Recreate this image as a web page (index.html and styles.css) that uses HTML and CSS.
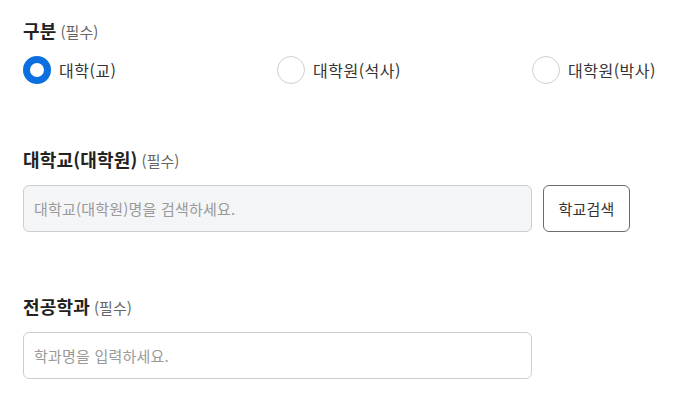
FILE: index.html
```html
<!DOCTYPE html>
<html lang="ko">
<head>
<meta charset="utf-8">
<title>학력 정보</title>
<link rel="stylesheet" href="styles.css">
</head>
<body>
<form class="form">
  <div class="field">
    <div class="label"><span class="label-text">구분</span><span class="req">(필수)</span></div>
    <div class="radios">
      <label class="radio"><span class="dot checked"></span><span class="radio-text">대학(교)</span></label>
      <label class="radio"><span class="dot"></span><span class="radio-text">대학원(석사)</span></label>
      <label class="radio"><span class="dot"></span><span class="radio-text">대학원(박사)</span></label>
    </div>
  </div>
  <div class="field field-school">
    <div class="label"><span class="label-text">대학교(대학원)</span><span class="req">(필수)</span></div>
    <div class="row">
      <div class="input readonly"><span class="ph">대학교(대학원)명을 검색하세요.</span></div>
      <button type="button" class="btn">학교검색</button>
    </div>
  </div>
  <div class="field">
    <div class="label"><span class="label-text">전공학과</span><span class="req">(필수)</span></div>
    <div class="row">
      <div class="input"><span class="ph">학과명을 입력하세요.</span></div>
    </div>
  </div>
</form>
</body>
</html>
```
FILE: styles.css
```css
* { box-sizing: border-box; }
html, body { margin: 0; padding: 0; background: #fff; }
body {
  font-family: "Noto Sans CJK KR", "Noto Sans", sans-serif;
  color: #333;
}
.form { padding: 18px 23px 0; }
.field { margin-bottom: 63px; }
.field-school { margin-bottom: 62px; }
.field:last-child { margin-bottom: 0; }
.label {
  display: flex;
  align-items: baseline;
  height: 24px;
  line-height: 24px;
  margin-bottom: 14px;
}
.label-text { font-size: 18px; font-weight: 700; color: #222; letter-spacing: 0.2px; }
.req { font-size: 15px; color: #666; margin-left: 4px; }
.radios {
  display: grid;
  grid-template-columns: 254px 255px 1fr;
  height: 28px;
}
.radio { display: flex; align-items: center; gap: 8px; }
.dot {
  width: 28px;
  height: 28px;
  border-radius: 50%;
  border: 1px solid #cfcfcf;
  background: #fff;
  flex: none;
}
.dot.checked { border: 7px solid #0b6fe0; }
.radio-text { font-size: 16px; color: #333; line-height: 28px; letter-spacing: 0.5px; }
.row { display: flex; gap: 11px; }
.input {
  flex: none;
  width: 509px;
  height: 47px;
  border: 1px solid #cdcdcd;
  border-radius: 6px;
  background: #fff;
  display: flex;
  align-items: center;
  padding-left: 10px;
}
.input.readonly { background: #f4f5f7; }
.ph { font-size: 15px; color: #9a9a9a; letter-spacing: 0.2px; }
.btn {
  flex: none;
  width: 87px;
  height: 47px;
  border: 1px solid #6b6b6b;
  border-radius: 6px;
  background: #fff;
  font-family: inherit;
  font-size: 15px;
  color: #333;
  padding: 0;
  letter-spacing: 0.2px;
}
```
